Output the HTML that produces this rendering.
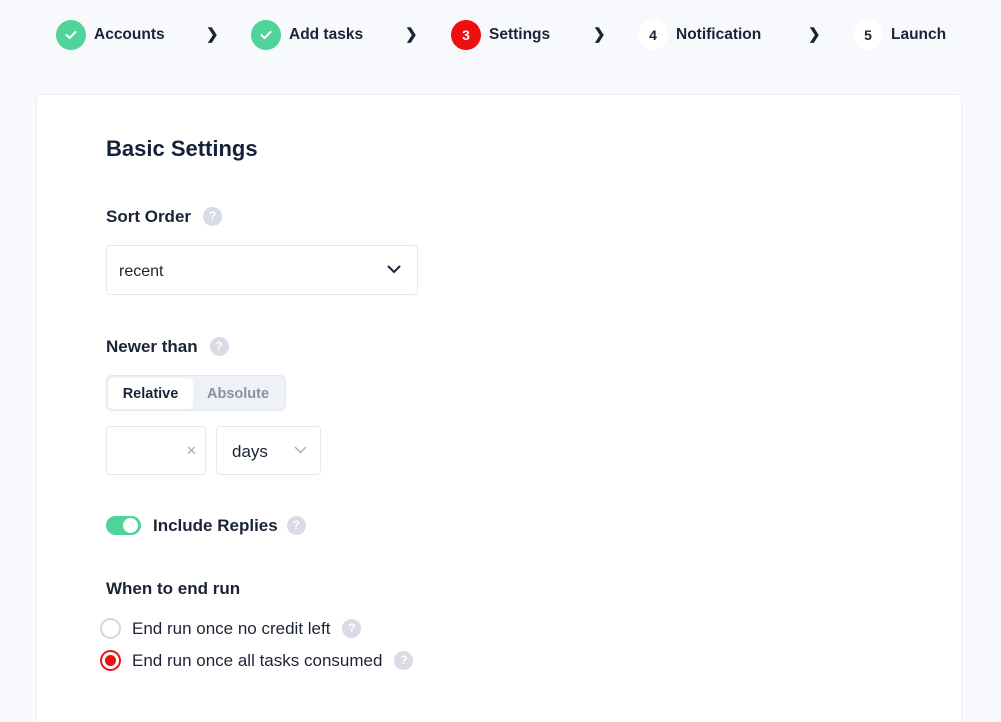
<!DOCTYPE html>
<html><head><meta charset="utf-8"><style>
*{box-sizing:border-box;margin:0;padding:0}
html,body{width:1001px;height:722px;overflow:hidden}
body{background:#f8f9fc;font-family:"Liberation Sans",sans-serif;color:#1b2437;position:relative}
.a{position:absolute}
.step{position:absolute;top:20px;height:30px;display:flex;align-items:center;font-size:15.5px;font-weight:600;color:#1b2437}
.circ{width:30px;height:30px;border-radius:50%;display:flex;align-items:center;justify-content:center;margin-right:8px;font-size:14px;font-weight:bold}
.g{background:#4fd398}.r{background:#ee0e0e;color:#fff}.w{background:#fff;color:#1b2437}
.chev{position:absolute;top:25px;font-size:15px;font-weight:bold;color:#1b2437}
.card{position:absolute;left:36px;top:94px;width:926px;height:640px;background:#fff;border:1px solid #edf0f5;border-radius:4px}
.lbl{position:absolute;font-size:17px;font-weight:600;color:#1b2437}
.q{display:inline-block;width:19px;height:19px;border-radius:50%;background:#d9dbe6;color:#fff;font-size:12px;font-weight:bold;text-align:center;line-height:19px;vertical-align:2px;margin-left:12px}
.box{position:absolute;border:1px solid #e6e8ee;border-radius:4px;background:#fff}
</style></head><body>
<div class="step" style="left:56px"><div class="circ g"><svg width="12" height="10" viewBox="0 0 12 10"><path d="M1.5 5 L4.5 8 L10.5 2" stroke="#fff" stroke-width="2" fill="none" stroke-linecap="round" stroke-linejoin="round"/></svg></div>Accounts</div>
<div class="chev" style="left:206px">&#x276F;</div>
<div class="step" style="left:251px"><div class="circ g"><svg width="12" height="10" viewBox="0 0 12 10"><path d="M1.5 5 L4.5 8 L10.5 2" stroke="#fff" stroke-width="2" fill="none" stroke-linecap="round" stroke-linejoin="round"/></svg></div>Add tasks</div>
<div class="chev" style="left:405px">&#x276F;</div>
<div class="step" style="left:451px"><div class="circ r">3</div>Settings</div>
<div class="chev" style="left:593px">&#x276F;</div>
<div class="step" style="left:638px"><div class="circ w">4</div>Notification</div>
<div class="chev" style="left:808px">&#x276F;</div>
<div class="step" style="left:853px"><div class="circ w">5</div>Launch</div>

<div class="card"></div>
<div class="a" style="left:106px;top:136px;font-size:22px;font-weight:bold;color:#14213a">Basic Settings</div>

<div class="lbl" style="left:106px;top:207px">Sort Order<span class="q">?</span></div>
<div class="box" style="left:106px;top:245px;width:312px;height:50px"></div>
<div class="a" style="left:119px;top:263px;font-size:16px;color:#1b2437">recent</div>
<svg class="a" style="left:387px;top:265px" width="14" height="9" viewBox="0 0 14 9"><path d="M1.5 1.5 L7 7 L12.5 1.5" stroke="#1b2437" stroke-width="2" fill="none" stroke-linecap="round"/></svg>

<div class="lbl" style="left:106px;top:337px">Newer than<span class="q">?</span></div>
<div class="a" style="left:106px;top:375px;width:180px;height:36px;background:#eef1f6;border:1px solid #e2e5ec;border-radius:6px"></div>
<div class="a" style="left:108px;top:378px;width:85px;height:31px;background:#fff;border-radius:5px;font-size:14.5px;font-weight:600;text-align:center;line-height:33px;color:#1b2437">Relative</div>
<div class="a" style="left:193px;top:378px;width:90px;height:31px;font-size:14.5px;font-weight:600;text-align:center;line-height:33px;color:#8a92a2">Absolute</div>

<div class="box" style="left:106px;top:426px;width:100px;height:49px"></div>
<div class="a" style="left:186px;top:443px;font-size:13px;color:#a8adb8">&#x2715;</div>
<div class="box" style="left:216px;top:426px;width:105px;height:49px"></div>
<div class="a" style="left:232px;top:442px;font-size:17px;color:#1b2437">days</div>
<svg class="a" style="left:294px;top:446px" width="13" height="8" viewBox="0 0 13 8"><path d="M1 1 L6.5 6.5 L12 1" stroke="#a8adb8" stroke-width="1.4" fill="none"/></svg>

<div class="a" style="left:106px;top:516px;width:35px;height:19px;border-radius:10px;background:#4fd398"></div>
<div class="a" style="left:123px;top:518px;width:15px;height:15px;border-radius:50%;background:#fff"></div>
<div class="lbl" style="left:153px;top:516px">Include Replies<span class="q" style="margin-left:9px">?</span></div>

<div class="lbl" style="left:106px;top:579px">When to end run</div>
<div class="a" style="left:100px;top:618px;width:21px;height:21px;border-radius:50%;border:2px solid #d6d8de;background:#fff"></div>
<div class="a" style="left:132px;top:619px;font-size:17px;color:#1b2437">End run once no credit left<span class="q">?</span></div>
<div class="a" style="left:100px;top:650px;width:21px;height:21px;border-radius:50%;border:2px solid #e3161b;background:#fff"></div>
<div class="a" style="left:105px;top:655px;width:11px;height:11px;border-radius:50%;background:#ee0e0e"></div>
<div class="a" style="left:132px;top:651px;font-size:17px;color:#1b2437">End run once all tasks consumed<span class="q">?</span></div>
</body></html>
